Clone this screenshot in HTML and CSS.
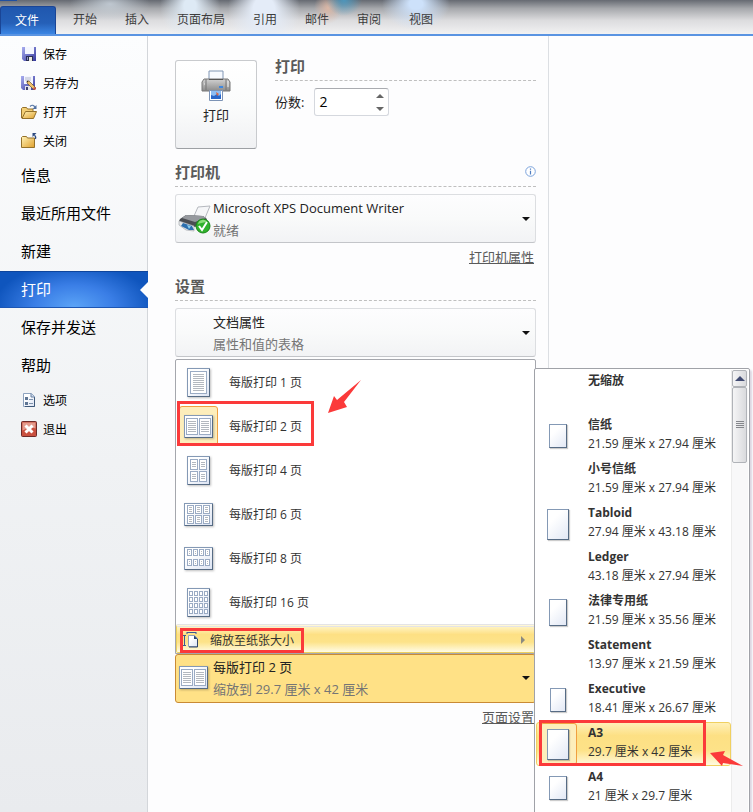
FILE: index.html
```html
<!DOCTYPE html>
<html lang="zh-CN">

<head>
    <meta charset="UTF-8">
    <meta name="viewport" content="width=device-width, initial-scale=1.0">
    <title>打印</title>
    <link rel="stylesheet" href="styles.css">
</head>

<body>
    <!-- Shared gradients -->
    <svg class="defs" width="0" height="0" aria-hidden="true">
        <defs>
            <linearGradient id="sheet" x1="0" y1="0" x2="1" y2="1">
                <stop offset="0.3" stop-color="#ffffff" />
                <stop offset="1" stop-color="#dbe3f3" />
            </linearGradient>
            <linearGradient id="disk" x1="0" y1="0" x2="1" y2="1">
                <stop offset="0" stop-color="#a9aef0" />
                <stop offset="1" stop-color="#34379c" />
            </linearGradient>
            <linearGradient id="folder" x1="0" y1="0" x2="1" y2="1">
                <stop offset="0" stop-color="#fff3b8" />
                <stop offset="1" stop-color="#e0a02c" />
            </linearGradient>
            <linearGradient id="metal" x1="0" y1="0" x2="0" y2="1">
                <stop offset="0" stop-color="#d2d2d2" />
                <stop offset="1" stop-color="#8b8b8b" />
            </linearGradient>
        </defs>
    </svg>

    <!-- Ribbon -->
    <header class="ribbon">
        <nav class="tabs">
            <a class="tab file" href="#">文件</a>
            <a class="tab" href="#">开始</a>
            <a class="tab" href="#">插入</a>
            <a class="tab" href="#">页面布局</a>
            <a class="tab" href="#">引用</a>
            <a class="tab" href="#">邮件</a>
            <a class="tab" href="#">审阅</a>
            <a class="tab" href="#">视图</a>
        </nav>
    </header>

    <div class="backstage">
        <!-- Sidebar -->
        <nav class="sidebar">
            <a class="small" href="#">
                <svg width="16" height="16" viewBox="0 0 16 16">
                    <path d="M1 1h14v14H3l-2-2z" fill="url(#disk)" />
                    <path d="M4 1h9v7H4z" fill="#f4f6ff" />
                    <path d="M5 10h7v5H5z" fill="#2b2f55" />
                    <path d="M8 11h3v4H8z" fill="#e8e8dc" />
                    <path d="M6 11h1v3H6z" fill="#8d93c8" />
                </svg>
                保存</a>
            <a class="small" href="#">
                <svg width="16" height="16" viewBox="0 0 16 16">
                    <path d="M0 1h14v14H2l-2-2z" fill="url(#disk)" />
                    <path d="M3 1h9v8H3z" fill="#f4f6ff" />
                    <path d="M4 3h6M4 5h6" stroke="#b4b8cc" />
                    <path d="M4 11h6v4H4z" fill="#e4e4ee" />
                    <path d="M5 12h2v3H5z" fill="#3d416b" />
                    <path d="M6 6l2 0 7 7-2 2-7-7z" fill="#efc069" stroke="#6b5130" stroke-width=".7" />
                    <path d="M13 12l2 1 0 1-1 1-2-1z" fill="#c0504d" />
                    <path d="M6 6h1.500L6 7.500z" fill="#222" />
                </svg>
                另存为</a>
            <a class="small" href="#">
                <svg width="16" height="16" viewBox="0 0 16 16">
                    <path d="M.5 14V4.500l1-1h4l1 1.500h5.500V8" fill="#f3cf74" stroke="#94712a" />
                    <path d="M1 14.500L4.500 7.500h11l-3 7z" fill="url(#folder)" stroke="#94712a" />
                    <path d="M9 2.500c2-2 4-1.500 5 1" fill="none" stroke="#5c7ba8" stroke-width="1.200" />
                    <path d="M15.500 1v4h-4z" fill="#4f6f9f" />
                </svg>
                打开</a>
            <a class="small" href="#">
                <svg width="16" height="16" viewBox="0 0 16 16">
                    <path d="M.5 14.500V4.500l1-1h4l1 1.500h7v9.500z" fill="url(#folder)" stroke="#94712a" />
                    <path d="M14.500 6c.5-2 0-3-1-4" fill="none" stroke="#2d4a80" stroke-width="1.200" />
                    <path d="M11.500 0h4l-4 4z" fill="#2d4a80" />
                </svg>
                关闭</a>
            <a class="large" href="#">信息</a>
            <a class="large" href="#">最近所用文件</a>
            <a class="large" href="#">新建</a>
            <a class="large selected" href="#">打印</a>
            <a class="large" href="#">保存并发送</a>
            <a class="large" href="#">帮助</a>
            <a class="small" href="#">
                <svg width="16" height="16" viewBox="0 0 16 16">
                    <path d="M2.500 1.500h8l3 3v10h-11z" fill="url(#sheet)" stroke="#8ea3bf" />
                    <path d="M13.500 5v9.500H4" fill="none" stroke="#3e5878" />
                    <path d="M10 1.500V5h3.500" fill="#cdd9ea" stroke="#6b83a4" />
                    <path d="M4 5h3v3H4zM4 10h3v3H4z" fill="#5f7694" />
                    <path d="M8 7.500h4M8 11.500h4" stroke="#7f93ad" />
                </svg>
                选项</a>
            <a class="small" href="#">
                <svg width="16" height="16" viewBox="0 0 16 16">
                    <rect x=".5" y=".5" width="15" height="15" rx="1" fill="#c9503f" stroke="#6e2a28" />
                    <path d="M1.500 1.500h13v6c-4-1-9 0-13 2z" fill="#e39b8d" />
                    <path d="M4.500 4.500l7 7M11.500 4.500l-7 7" stroke="#fff" stroke-width="3" />
                </svg>
                退出</a>
        </nav>

        <!-- Print settings -->
        <main class="print">
            <section class="print-row">
                <button class="print-button" type="button">
                    <svg width="30" height="32" viewBox="0 0 30 32">
                        <path d="M8 1h14v11H8z" fill="#f7faff" stroke="#8096b4" />
                        <path d="M3 9h24l2 3v9H1v-9z" fill="url(#metal)" stroke="#777" />
                        <path d="M5 9v11M25 9v11" stroke="#777" />
                        <path d="M8 9h14v1H8z" fill="#555" />
                        <path d="M3 14h1M26 12h2M26 14h2M26 16h2" stroke="#eee" />
                        <path d="M18 17h4" stroke="#3d87e0" stroke-width="2" />
                        <path d="M8.500 20.500h13v10h-13z" fill="#fff" stroke="#7c93b5" />
                        <path d="M10 21h10v8H10z" fill="#8dbdf3" />
                        <path d="M10 29v-4l3 1 3-2 2 2 2-2v5z" fill="#2a66c8" />
                        <path d="M15 22l3 2-2 2z" fill="#e0633c" />
                    </svg>
                    <span>打印</span>
                </button>
                <div class="copies">
                    <h2>打印</h2>
                    <div class="copies-field">
                        <label for="copies">份数:</label>
                        <div class="spinner">
                            <input type="text" id="copies" name="copies" value="2">
                            <div class="spinner-buttons">
                                <button class="up" type="button" aria-label="增加"></button>
                                <button class="down" type="button" aria-label="减少"></button>
                            </div>
                        </div>
                    </div>
                </div>
            </section>

            <!-- Printer -->
            <section class="printer">
                <h2>打印机
                    <svg class="info" width="11" height="11" viewBox="0 0 11 11">
                        <circle cx="5.500" cy="5.500" r="4.800" fill="#fff" stroke="#7ba3dc" />
                        <path d="M5.500 2.500v1.200M5.500 4.800v3.700" stroke="#4f7dc0" stroke-width="1.200" />
                    </svg>
                </h2>
                <button class="dropdown" type="button">
                    <svg class="dropdown-icon" width="34" height="32" viewBox="0 0 34 32">
                        <path d="M16 13l4-9 12-1-5 12z" fill="#f5f6f8" stroke="#b5b8be" />
                        <path d="M8 12l17 1 4 3-2 6-11 2-15-6 1-2z" fill="#4a4d52" />
                        <path d="M8 12l17 1 3 2-11 4-13-4z" fill="#96999e" />
                        <path d="M1 18l15 5v5l-8-1-7-5z" fill="#e6e9ec" stroke="#9a9da3" stroke-width=".6" />
                        <path d="M5 20l9 3 2 4-5 0-8-4z" fill="#2d6fae" />
                        <path d="M9 22l4 1-2 3z" fill="#8ed0ef" />
                        <circle cx="25" cy="23" r="7" fill="#2fb12b" stroke="#1b861a" />
                        <path d="M20 21a5 5 0 0 1 9-2c-3 0-6 1-9 2z" fill="#8ade78" />
                        <path d="M21 23l3 4 5-8" fill="none" stroke="#fff" stroke-width="2" />
                    </svg>
                    <span class="dropdown-text">
                        <span>Microsoft XPS Document Writer</span>
                        <span class="sub">就绪</span>
                    </span>
                </button>
                <p class="more"><a href="#">打印机属性</a></p>
            </section>

            <!-- Settings -->
            <section class="settings">
                <h2>设置</h2>
                <button class="dropdown" type="button">
                    <span class="dropdown-icon"></span>
                    <span class="dropdown-text">
                        <span>文档属性</span>
                        <span class="sub">属性和值的表格</span>
                    </span>
                </button>

                <div class="pages">
                    <div class="menu">
                        <button class="menu-item" type="button">
                            <span class="menu-icon">
                                <svg class="sheet" width="23" height="29" viewBox="0 0 23 29">
                                    <path class="page" d="M.5 .5h22v28H.5z" />
                                    <path class="edge" d="M22.500 1v27.500H1" />
                                    <path class="cells" d="M3.500 3.500h16v22h-16z" />
                                    <path class="lines" d="M6 6.500h11M6 8.500h11M6 10.500h11M6 12.500h11M6 14.500h11M6 16.500h11M6 18.500h11M6 20.500h11M6 22.500h11" />
                                </svg>
                            </span>
                            每版打印 1 页
                        </button>
                        <button class="menu-item current" type="button">
                            <span class="menu-icon">
                                <svg class="sheet" width="29" height="23" viewBox="0 0 29 23">
                                    <path class="page" d="M.5 .5h28v22H.5z" />
                                    <path class="edge" d="M28.500 1v21.500H1" />
                                    <path class="cells" d="M2.500 3.500h11v16h-11zM15.500 3.500h11v16h-11z" />
                                    <path class="lines" d="M4 6.500h8M4 8.500h8M4 10.500h8M4 12.500h8M4 14.500h8M4 16.500h8M17 6.500h8M17 8.500h8M17 10.500h8M17 12.500h8M17 14.500h8M17 16.500h8" />
                                </svg>
                            </span>
                            每版打印 2 页
                            <span class="mark mark-pages"></span>
                            <svg class="arrow arrow-pages" width="34" height="34" viewBox="0 0 34 34">
                                <path d="M0 33L6 16l3 4L33 0 16 22l3 5z" />
                            </svg>
                        </button>
                        <button class="menu-item" type="button">
                            <span class="menu-icon">
                                <svg class="sheet" width="23" height="29" viewBox="0 0 23 29">
                                    <path class="page" d="M.5 .5h22v28H.5z" />
                                    <path class="edge" d="M22.500 1v27.500H1" />
                                    <path class="cells" d="M3.500 3.500h7v10h-7zM12.500 3.500h7v10h-7zM3.500 15.500h7v10h-7zM12.500 15.500h7v10h-7z" />
                                    <path class="lines" d="M5 6.500h4M5 8.500h4M5 10.500h4M14 6.500h4M14 8.500h4M14 10.500h4M5 18.500h4M5 20.500h4M5 22.500h4M14 18.500h4M14 20.500h4M14 22.500h4" />
                                </svg>
                            </span>
                            每版打印 4 页
                        </button>
                        <button class="menu-item" type="button">
                            <span class="menu-icon">
                                <svg class="sheet" width="29" height="23" viewBox="0 0 29 23">
                                    <path class="page" d="M.5 .5h28v22H.5z" />
                                    <path class="edge" d="M28.500 1v21.500H1" />
                                    <path class="cells" d="M3.500 2.500h6v8h-6zM11.500 2.500h6v8h-6zM19.500 2.500h6v8h-6zM3.500 12.500h6v8h-6zM11.500 12.500h6v8h-6zM19.500 12.500h6v8h-6z" />
                                    <path class="lines" d="M5 4.500h3M5 6.500h3M5 8.500h3M13 4.500h3M13 6.500h3M13 8.500h3M21 4.500h3M21 6.500h3M21 8.500h3M5 14.500h3M5 16.500h3M5 18.500h3M13 14.500h3M13 16.500h3M13 18.500h3M21 14.500h3M21 16.500h3M21 18.500h3" />
                                </svg>
                            </span>
                            每版打印 6 页
                        </button>
                        <button class="menu-item" type="button">
                            <span class="menu-icon">
                                <svg class="sheet" width="29" height="23" viewBox="0 0 29 23">
                                    <path class="page" d="M.5 .5h28v22H.5z" />
                                    <path class="edge" d="M28.500 1v21.500H1" />
                                    <path class="cells" d="M3.500 2.500h4v6h-4zM9.500 2.500h4v6h-4zM15.500 2.500h4v6h-4zM21.500 2.500h4v6h-4zM3.500 12.500h4v6h-4zM9.500 12.500h4v6h-4zM15.500 12.500h4v6h-4zM21.500 12.500h4v6h-4z" />
                                    <path class="lines" d="M5 4.500h1M5 6.500h1M11 4.500h1M11 6.500h1M17 4.500h1M17 6.500h1M23 4.500h1M23 6.500h1M5 14.500h1M5 16.500h1M11 14.500h1M11 16.500h1M17 14.500h1M17 16.500h1M23 14.500h1M23 16.500h1" />
                                </svg>
                            </span>
                            每版打印 8 页
                        </button>
                        <button class="menu-item" type="button">
                            <span class="menu-icon">
                                <svg class="sheet" width="23" height="29" viewBox="0 0 23 29">
                                    <path class="page" d="M.5 .5h22v28H.5z" />
                                    <path class="edge" d="M22.500 1v27.500H1" />
                                    <path class="cells" d="M2.500 3.500h3v4h-3zM7.500 3.500h3v4h-3zM12.500 3.500h3v4h-3zM17.500 3.500h3v4h-3zM2.500 9.500h3v4h-3zM7.500 9.500h3v4h-3zM12.500 9.500h3v4h-3zM17.500 9.500h3v4h-3zM2.500 15.500h3v4h-3zM7.500 15.500h3v4h-3zM12.500 15.500h3v4h-3zM17.500 15.500h3v4h-3zM2.500 21.500h3v4h-3zM7.500 21.500h3v4h-3zM12.500 21.500h3v4h-3zM17.500 21.500h3v4h-3z" />
                                </svg>
                            </span>
                            每版打印 16 页
                        </button>
                        <button class="scale-item" type="button">
                            <svg width="16" height="16" viewBox="0 0 16 16">
                                <path d="M1.500 14V3M4 .5h9" fill="none" stroke="#3a5a92" />
                                <path d="M0 3.500h3M0 13.500h3M4 0v2M13 0v2" stroke="#3a5a92" />
                                <path d="M5.500 3.500h6l3 3v8h-9z" fill="url(#sheet)" stroke="#8ea0bd" />
                                <path d="M14.500 7v8H6" fill="none" stroke="#2f456b" />
                                <path d="M11 3.500V7h3.500z" fill="#24426f" />
                            </svg>
                            缩放至纸张大小
                            <span class="mark mark-scale"></span>
                        </button>
                    </div>

                    <button class="dropdown open" type="button">
                        <span class="dropdown-icon">
                            <svg class="sheet" width="29" height="23" viewBox="0 0 29 23">
                                <path class="page" d="M.5 .5h28v22H.5z" />
                                <path class="edge" d="M28.500 1v21.500H1" />
                                <path class="cells" d="M2.500 3.500h11v16h-11zM15.500 3.500h11v16h-11z" />
                                <path class="lines" d="M4 6.500h8M4 8.500h8M4 10.500h8M4 12.500h8M4 14.500h8M4 16.500h8M17 6.500h8M17 8.500h8M17 10.500h8M17 12.500h8M17 14.500h8M17 16.500h8" />
                            </svg>
                        </span>
                        <span class="dropdown-text">
                            <span>每版打印 2 页</span>
                            <span class="sub">缩放到 29.7 厘米 x 42 厘米</span>
                        </span>
                    </button>

                    <!-- Paper sizes -->
                    <div class="submenu">
                        <div class="paper-list">
                            <button class="paper" type="button">
                                <span class="paper-icon"></span>
                                <span class="paper-text"><b>无缩放</b></span>
                            </button>
                            <button class="paper" type="button">
                                <span class="paper-icon"><i class="letter"></i></span>
                                <span class="paper-text"><b>信纸</b><span>21.59 厘米 x 27.94 厘米</span></span>
                            </button>
                            <button class="paper" type="button">
                                <span class="paper-icon"></span>
                                <span class="paper-text"><b>小号信纸</b><span>21.59 厘米 x 27.94 厘米</span></span>
                            </button>
                            <button class="paper" type="button">
                                <span class="paper-icon"><i class="tabloid"></i></span>
                                <span class="paper-text"><b>Tabloid</b><span>27.94 厘米 x 43.18 厘米</span></span>
                            </button>
                            <button class="paper" type="button">
                                <span class="paper-icon"></span>
                                <span class="paper-text"><b>Ledger</b><span>43.18 厘米 x 27.94 厘米</span></span>
                            </button>
                            <button class="paper" type="button">
                                <span class="paper-icon"><i class="legal"></i></span>
                                <span class="paper-text"><b>法律专用纸</b><span>21.59 厘米 x 35.56 厘米</span></span>
                            </button>
                            <button class="paper" type="button">
                                <span class="paper-icon"></span>
                                <span class="paper-text"><b>Statement</b><span>13.97 厘米 x 21.59 厘米</span></span>
                            </button>
                            <button class="paper" type="button">
                                <span class="paper-icon"><i class="executive"></i></span>
                                <span class="paper-text"><b>Executive</b><span>18.41 厘米 x 26.67 厘米</span></span>
                            </button>
                            <button class="paper current" type="button">
                                <span class="paper-icon"><i class="tabloid"></i></span>
                                <span class="paper-text"><b>A3</b><span>29.7 厘米 x 42 厘米</span></span>
                                <span class="mark mark-paper"></span>
                                <svg class="arrow arrow-paper" width="34" height="16" viewBox="0 0 34 16">
                                    <path d="M0 2L15 0l-2 4 20 11-20-3-1 3z" />
                                </svg>
                            </button>
                            <button class="paper" type="button">
                                <span class="paper-icon"><i class="a4"></i></span>
                                <span class="paper-text"><b>A4</b><span>21 厘米 x 29.7 厘米</span></span>
                            </button>
                        </div>
                        <div class="scrollbar">
                            <button class="scroll-up" type="button" aria-label="向上滚动"></button>
                            <div class="thumb"></div>
                        </div>
                    </div>
                </div>
                <p class="more"><a href="#">页面设置</a></p>
            </section>
        </main>
    </div>
</body>

</html>
```
FILE: styles.css
```css
* {
    box-sizing: border-box;
}

body {
    margin: 0;
    height: 100vh;
    display: flex;
    flex-direction: column;
    overflow: hidden;
    font-family: "Open Sans", "Noto Sans CJK SC", sans-serif;
    font-size: 12px;
    color: #222;
    background: #fdfdfe;
}

button {
    font: inherit;
    color: inherit;
    padding: 0;
    border: none;
    background: none;
    text-align: left;
}

a {
    color: inherit;
    text-decoration: none;
}

.defs {
    position: absolute;
}

/* Ribbon */
.ribbon {
    flex: none;
    height: 36px;
    padding-top: 6px;
    border-bottom: 2px solid #5a94e2;
    background:
        linear-gradient(#2150a0, #2150a0) 0 0 / 17px 1px no-repeat,
        radial-gradient(ellipse 18px 16px at 344px 0, rgba(70, 160, 205, 0.8), transparent),
        radial-gradient(ellipse 14px 16px at 328px 8px, rgba(225, 185, 165, 0.9), transparent),
        radial-gradient(ellipse 34px 26px at 416px 4px, rgba(205, 225, 250, 1) 20%, transparent),
        radial-gradient(ellipse 36px 44px at 264px 10px, rgba(228, 236, 248, 1) 30%, transparent),
        radial-gradient(ellipse 30px 36px at 190px 6px, rgba(222, 234, 245, 1) 20%, transparent),
        radial-gradient(ellipse 40px 18px at 110px 4px, rgba(205, 215, 224, 0.8), transparent),
        linear-gradient(#666a72, #a6a8ac 25%, #dcdcde 60%, #f2f2f3);
}

.tabs {
    display: flex;
    height: 28px;
}

.tab {
    padding: 0 14px;
    line-height: 27px;
    color: #3c3c3c;
}

.tab.file {
    width: 56px;
    margin-right: 3px;
    border: 1px solid #1a4596;
    border-bottom: none;
    border-radius: 3px 3px 0 0;
    background: linear-gradient(#2057ae, #2560b8 60%, #3b86e4);
    color: #fff;
}

/* Sidebar */
.backstage {
    flex: 1;
    display: flex;
    min-height: 0;
}

.sidebar {
    flex: none;
    width: 148px;
    padding-top: 4px;
    border-right: 1px solid #d3d6da;
    background: linear-gradient(#fcfdfe, #f0f2f4 55%, #e9ebee);
    color: #000;
}

.sidebar a {
    display: flex;
    align-items: center;
    padding-bottom: 2px;
    padding-left: 21px;
}

.sidebar .small {
    height: 29px;
    gap: 6px;
}

.sidebar .large {
    height: 38px;
    font-size: 15px;
}

.large + .small {
    margin-top: 2px;
}

.sidebar .selected {
    position: relative;
    height: 37px;
    margin-top: 1px;
    margin-right: -1px;
    border-top: 1px solid #0e459c;
    border-bottom: 1px solid #1c56b4;
    background: radial-gradient(ellipse 80px 44px at 50% 100%, #5ba4f7, #3a7ee6 50%, #0f55bd);
    color: #fff;
}

.selected::after {
    content: "";
    position: absolute;
    right: 0;
    top: 10px;
    border: 8px solid transparent;
    border-left: none;
    border-right-color: #fdfdfe;
}

/* Print pane */
.print {
    flex: none;
    width: 401px;
    padding: 24px 12px 0 27px;
    border-right: 1px solid #dcdfe3;
}

h2 {
    display: flex;
    justify-content: space-between;
    margin: 0;
    padding-bottom: 8px;
    border-bottom: 1px dashed #bfbfbf;
    font-size: 15px;
    line-height: 12px;
    color: #5a5a5a;
}

.print-row {
    display: flex;
    gap: 18px;
}

.print-button {
    display: flex;
    flex-direction: column;
    align-items: center;
    gap: 3px;
    width: 82px;
    height: 89px;
    padding-top: 9px;
    border: 1px solid #c9cbce;
    border-bottom-color: #9da0a4;
    border-radius: 3px;
    background: linear-gradient(#fff, #fbfcfc 50%, #f0f1f3);
    font-size: 13px;
}

.copies {
    flex: 1;
}

.copies-field {
    display: flex;
    align-items: center;
    gap: 10px;
    margin-top: 7px;
    font-size: 13px;
}

.copies-field label {
    padding-bottom: 2px;
}

.spinner {
    display: flex;
    width: 75px;
    height: 28px;
    border: 1px solid #d5d8de;
    border-top-color: #a9abb0;
    border-radius: 3px;
    background: #fff;
}

.spinner input {
    flex: 1;
    min-width: 0;
    padding: 0 4px 2px;
    border: none;
    background: none;
    font: inherit;
    font-size: 14px;
}

.spinner-buttons {
    display: flex;
    flex-direction: column;
    justify-content: space-around;
    width: 12px;
}

.up,
.down {
    width: 8px;
    height: 4px;
    border-left: 4px solid transparent;
    border-right: 4px solid transparent;
}

.up {
    border-bottom: 4px solid #666;
}

.down {
    border-top: 4px solid #666;
}

.printer {
    margin-top: 17px;
}

.settings {
    margin-top: 14px;
}

.dropdown {
    display: flex;
    align-items: center;
    width: 100%;
    height: 49px;
    margin-top: 7px;
    padding: 0 5px 0 2px;
    border: 1px solid #dcdee1;
    border-bottom-color: #c3c5c9;
    border-radius: 3px;
    background: linear-gradient(#fdfdfe, #f9fafa 50%, #f2f3f5);
    font-size: 13px;
}

.dropdown::after {
    content: "";
    border: 4px solid transparent;
    border-top-color: #111;
    border-bottom: none;
}

.dropdown-icon {
    flex: none;
    width: 34px;
}

.dropdown-text {
    flex: 1;
    display: flex;
    flex-direction: column;
    padding-left: 1px;
    line-height: 22px;
}

.sub {
    color: #757575;
}

.more {
    margin: 5px 2px 0 0;
    font-size: 13px;
    line-height: 18px;
    text-align: right;
    color: #5a5a5a;
}

.more a {
    text-decoration: underline;
}

/* Pages per sheet */
.pages {
    position: relative;
    margin-top: 2px;
}

.menu {
    border: 1px solid #a5a7ad;
    border-radius: 2px 2px 0 0;
    background: #fff;
    color: #333;
}

.menu-item {
    position: relative;
    display: flex;
    align-items: center;
    gap: 11px;
    width: 100%;
    height: 44px;
    padding-left: 3px;
}

.menu-icon {
    display: flex;
    align-items: center;
    justify-content: center;
    width: 39px;
    height: 40px;
    border: 1px solid transparent;
    border-radius: 3px;
}

.current .menu-icon {
    border-color: #f0a040;
    background: #fdeebb;
}

.sheet {
    display: block;
    shape-rendering: crispEdges;
    filter: drop-shadow(1px 1px 1px rgba(0, 0, 0, 0.25));
}

.sheet path {
    fill: none;
}

.sheet .page {
    fill: url(#sheet);
    stroke: #8499b5;
}

.sheet .edge {
    stroke: #566b84;
}

.sheet .cells {
    fill: #fff;
    stroke: #9aabc4;
}

.sheet .lines {
    stroke: #b3b8bf;
}

.scale-item {
    position: relative;
    display: flex;
    align-items: center;
    gap: 11px;
    width: 100%;
    height: 29px;
    padding: 0 9px 0 6px;
    border: 1px solid #eed05c;
    border-top: 3px double #e4e4e6;
    border-radius: 2px;
    background: linear-gradient(#fff3c0, #fde084 30%, #fde389 60%, #fffbe4);
}

.scale-item::after {
    content: "";
    margin-left: auto;
    border: 4px solid transparent;
    border-left-color: #8a8a80;
    border-right: none;
}

.dropdown.open {
    margin-top: 0;
    padding-bottom: 2px;
    border-color: #c98a35;
    background: #ffe186;
}

.open .dropdown-icon {
    padding-left: 1px;
}

/* Paper size submenu */
.submenu {
    position: absolute;
    top: 9px;
    left: calc(100% - 2px);
    display: flex;
    width: 216px;
    padding: 1px;
    border: 1px solid #a0a2a8;
    border-radius: 2px;
    background: #fff;
    color: #333;
    box-shadow: 2px 2px 2px rgba(90, 60, 110, 0.2);
}

.paper-list {
    flex: 1;
    padding-bottom: 12px;
}

.paper {
    position: relative;
    display: flex;
    gap: 11px;
    width: 100%;
    height: 44px;
    padding-left: 3px;
    border: 1px solid transparent;
    border-radius: 3px;
}

.paper.current {
    border-color: #f0d060;
    background: linear-gradient(#fff0b8, #fde084 30%, #fde288 65%, #fffae0);
}

.paper-icon {
    display: flex;
    align-items: center;
    justify-content: center;
    width: 37px;
    height: 42px;
    padding-right: 2px;
    border: 1px solid transparent;
    border-radius: 3px;
}

.current .paper-icon {
    border-color: #f0a040;
    background: #fdeebb;
}

.paper-icon i {
    width: 18px;
    height: 24px;
    border: 1px solid #8499b5;
    border-right-color: #566b84;
    border-bottom-color: #566b84;
    background: linear-gradient(135deg, #fff 30%, #e2e8f5);
    box-shadow: 1px 1px 1px rgba(0, 0, 0, 0.2);
}

.paper-icon .tabloid {
    width: 22px;
    height: 31px;
}

.paper-icon .legal {
    height: 27px;
}

.paper-icon .executive {
    width: 16px;
}

.paper-text {
    display: flex;
    flex-direction: column;
    line-height: 19px;
    white-space: nowrap;
}

.scrollbar {
    width: 17px;
    border-left: 1px solid #ececec;
    background: #f8f8f9;
}

.scroll-up,
.thumb {
    display: flex;
    align-items: center;
    justify-content: center;
    width: 15px;
    border: 1px solid #b0b3b8;
    border-radius: 2px;
    background: linear-gradient(90deg, #f5f5f6, #d9dadd);
}

.scroll-up {
    height: 17px;
}

.scroll-up::after {
    content: "";
    border: 5px solid transparent;
    border-top: none;
    border-bottom-color: #414b72;
}

.thumb {
    height: 76px;
}

.thumb::after {
    content: "";
    width: 8px;
    height: 8px;
    background: repeating-linear-gradient(#85878c 0 1px, transparent 1px 2px);
}

/* Red callouts */
.mark {
    position: absolute;
    border: 3px solid #fb3a3a;
}

.mark-pages {
    left: 1px;
    top: -3px;
    width: 137px;
    height: 45px;
}

.mark-scale {
    left: 3px;
    top: 1px;
    width: 124px;
    height: 25px;
}

.mark-paper {
    left: 2px;
    top: -3px;
    width: 167px;
    height: 46px;
}

.arrow {
    position: absolute;
    fill: #fb3a3a;
}

.arrow-pages {
    left: 152px;
    top: -24px;
}

.arrow-paper {
    z-index: 1;
    left: 173px;
    top: 28px;
}
```
